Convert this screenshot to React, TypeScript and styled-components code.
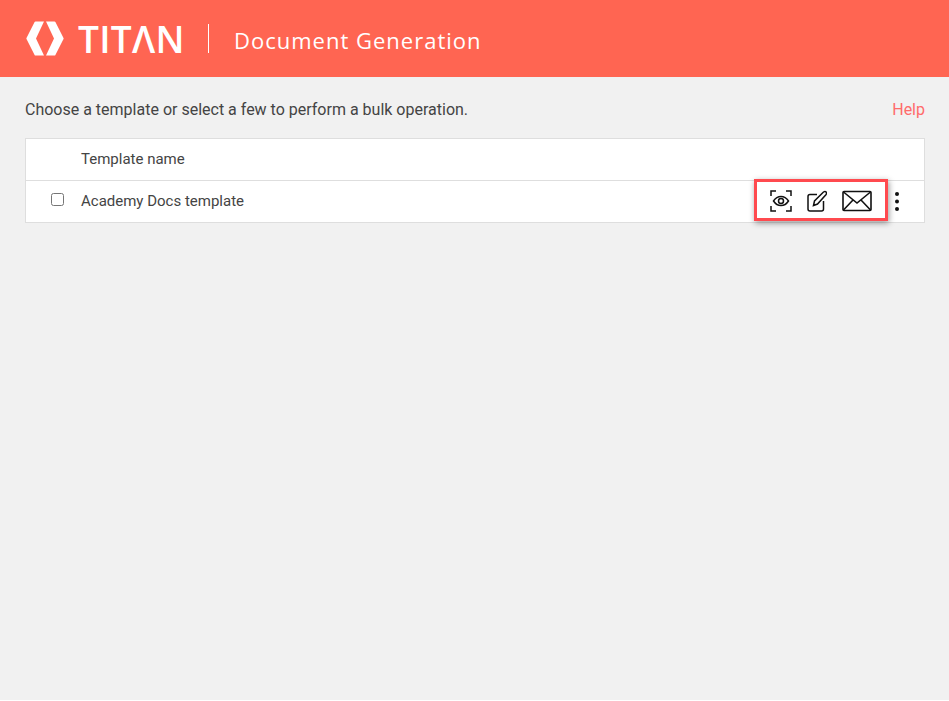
import React from "react";
import styled, { createGlobalStyle } from "styled-components";

const Global = createGlobalStyle`
  html, body { margin: 0; padding: 0; background: #fff; }
  body { font-family: Roboto, "Liberation Sans", sans-serif; }
`;
const Page = styled.div`
  height: 700px;
  background: #f1f1f1;
  display: flex;
  flex-direction: column;
`;
const Header = styled.header`
  height: 77px;
  background: #ff6552;
  display: flex;
  align-items: center;
  padding-left: 26px;
  color: #fff;
`;
const Brand = styled.div`
  display: flex;
  align-items: center;
  gap: 14px;
  width: 156px;
`;
const LogoMark = styled.svg`
  flex-shrink: 0;
  fill: #fff;
`;
const BrandName = styled.span`
  font-family: "Open Sans", sans-serif;
  font-size: 37px;
  font-weight: 600;
  line-height: 40px;
  letter-spacing: 0.3px;
`;
const Divider = styled.div`
  width: 1px;
  height: 29px;
  background: #fff;
  margin: 0 25px 0 26px;
`;
const Title = styled.h1`
  margin: 0;
  padding-top: 2px;
  font-family: "Open Sans", sans-serif;
  font-weight: 400;
  font-size: 22px;
  letter-spacing: 1px;
`;
const Content = styled.main`
  padding: 0 24px 0 25px;
`;
const Intro = styled.div`
  display: flex;
  justify-content: space-between;
  align-items: center;
  box-sizing: border-box;
  height: 61px;
  padding-top: 4px;
  font-size: 16px;
  color: #444;
`;
const Help = styled.a`
  color: #ff6b6b;
`;
const Table = styled.div`
  background: #fff;
  border: 1px solid #dedede;
  border-bottom: 0;
`;
const Row = styled.div`
  height: 41px;
  border-bottom: 1px solid #dedede;
  display: flex;
  align-items: center;
  font-size: 15px;
  color: #444;
`;
const CheckCell = styled.div`
  width: 55px;
  display: flex;
  justify-content: center;
`;
const Check = styled.input`
  width: 13px;
  height: 13px;
  margin: 0 0 4px 8px;
`;
const Name = styled.div`
  flex: 1;
  padding-bottom: 2px;
`;
const Actions = styled.div`
  display: flex;
  align-items: center;
  height: 41px;
  position: relative;
`;
const Highlight = styled.div`
  display: flex;
  align-items: center;
  gap: 15px;
  height: 42px;
  flex-shrink: 0;
  padding: 1px 13px 0;
  margin: 0 36px 3px 0;
  box-sizing: border-box;
  border: 3px solid #ff4a4f;
  box-shadow: 1px 2px 6px rgba(0, 0, 0, 0.4);
`;
const Icon = styled.svg`
  display: block;
  flex-shrink: 0;
  fill: none;
  stroke: #111;
`;
const More = styled.svg`
  position: absolute;
  right: 25px;
  top: 11px;
  fill: #111;
`;

export default function App() {
  return (
    <Page>
      <Global />
      <Header>
        <Brand>
          <LogoMark width="38" height="35" viewBox="0 0 38 35">
            <path d="M9.500 0.500h8.500L10 17.500 18 34.500H9.500a1 1 0 0 1-.9-.6L0.500 18a1 1 0 0 1 0-1L8.600 1.100a1 1 0 0 1 .9-.6z" />
            <path d="M28.500 0.500H20L28 17.500 20 34.500h8.500a1 1 0 0 0 .9-.6L37.500 18a1 1 0 0 0 0-1L29.400 1.100a1 1 0 0 0-.9-.6z" />
          </LogoMark>
          <BrandName>TITΛN</BrandName>
        </Brand>
        <Divider />
        <Title>Document Generation</Title>
      </Header>
      <Content>
        <Intro>
          <span>Choose a template or select a few to perform a bulk operation.</span>
          <Help>Help</Help>
        </Intro>
        <Table>
          <Row>
            <CheckCell />
            <Name>Template name</Name>
          </Row>
          <Row>
            <CheckCell>
              <Check type="checkbox" />
            </CheckCell>
            <Name>Academy Docs template</Name>
            <Actions>
              <Highlight>
                <Icon width="22" height="22" viewBox="0 0 22 22" strokeWidth="1.500">
                  <path d="M1 6V1H6M16 1h5V6M21 16v5H16M6 21H1V16" />
                  <path d="M3.500 11c2-3 4.700-4.500 7.500-4.500s5.500 1.500 7.500 4.500c-2 3-4.700 4.500-7.500 4.500S5.500 14 3.500 11z" />
                  <circle cx="11" cy="11" r="2.500" />
                </Icon>
                <Icon width="20" height="22" viewBox="0 0 20 22" strokeWidth="1.500">
                  <path d="M10 4.500H3A2 2 0 0 0 1 6.500v12.500a2 2 0 0 0 2 2h11.500a2 2 0 0 0 2-2V11" />
                  <path d="M6.500 15.500l1-4.500L16.500 2c1-.7 2-.7 2.600 0s.5 1.800-.2 2.700L10.500 14z" />
                </Icon>
                <Icon width="30" height="22" viewBox="0 0 30 22" strokeWidth="1.600">
                  <rect x="1" y="1.500" width="28" height="19" rx="1" />
                  <path d="M1.500 2l13.500 11L28.500 2M1.500 20l9.500-10M28.500 20L19 10" />
                </Icon>
              </Highlight>
              <More width="4" height="19" viewBox="0 0 4 19">
                <circle cx="2" cy="2" r="2" />
                <circle cx="2" cy="9.500" r="2" />
                <circle cx="2" cy="17" r="2" />
              </More>
            </Actions>
          </Row>
        </Table>
      </Content>
    </Page>
  );
}
